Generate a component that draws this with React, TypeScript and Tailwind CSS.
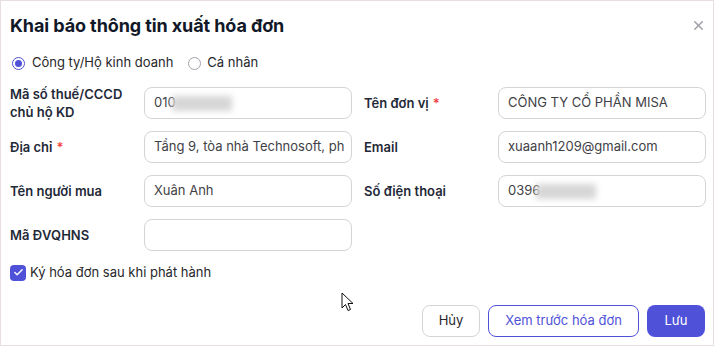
import { Check, X } from 'lucide-react';

const font = { fontFamily: 'Inter, "Noto Sans", sans-serif' };

function Blur({ w }: { w: number }) {
  return <span className="inline-block h-[15px] -ml-[4px] bg-[#d6d6d6] blur-[3px] align-middle" style={{ width: w }} />;
}

function Field({ value, children }: { value?: string; children?: React.ReactNode }) {
  return (
    <div className="w-[208px] h-[32px] shrink-0 rounded-lg border border-[#d4d4d8] flex items-center px-[9px] text-[13px] text-[#3f3f46] whitespace-nowrap overflow-hidden">
      {children ?? value}
    </div>
  );
}

function Label({ children, req }: { children: React.ReactNode; req?: boolean }) {
  return (
    <div className="w-[134px] shrink-0 -my-[2px] text-[13px] font-semibold text-[#1f2937] leading-[18px]">
      {children}
      {req && <span className="text-[#ef4444] ml-1">*</span>}
    </div>
  );
}

export default function App() {
  return (
    <div className="w-[716px] h-[347px] bg-white" style={font}>
      <div className="relative w-[714px] h-[346px] border border-[#e6dee1] flex flex-col pl-[9px] pr-[7px]">
        <div className="flex items-center justify-between h-[48px]">
          <h1 className="text-[18px] font-bold text-[#111827] tracking-[-0.1px]">Khai báo thông tin xuất hóa đơn</h1>
          <X size={15} strokeWidth={2.5} className="text-[#a1a1aa] mt-[1px]" />
        </div>

        <div className="flex items-center h-[28px] text-[13px] text-[#27272a] gap-[15px]">
          <label className="flex items-center gap-[7px] pl-[2px]">
            <span className="w-[13px] h-[13px] rounded-full border border-[#4f52d9] flex items-center justify-center">
              <span className="w-[7px] h-[7px] rounded-full bg-[#4f52d9]" />
            </span>
            Công ty/Hộ kinh doanh
          </label>
          <label className="flex items-center gap-[6px]">
            <span className="w-[13px] h-[13px] rounded-full border border-[#a1a1aa]" />
            Cá nhân
          </label>
        </div>

        <div className="grid grid-cols-[342px_342px] gap-x-[12px] gap-y-[12px] mt-[10px]">
          <div className="flex items-center">
            <Label>Mã số thuế/CCCD chủ hộ KD</Label>
            <Field>
              010
              <Blur w={60} />
            </Field>
          </div>
          <div className="flex items-center">
            <Label req>Tên đơn vị</Label>
            <Field value="CÔNG TY CỔ PHẦN MISA" />
          </div>
          <div className="flex items-center">
            <Label req>Địa chỉ</Label>
            <Field value="Tầng 9, tòa nhà Technosoft, ph" />
          </div>
          <div className="flex items-center">
            <Label>Email</Label>
            <Field value="xuaanh1209@gmail.com" />
          </div>
          <div className="flex items-center">
            <Label>Tên người mua</Label>
            <Field value="Xuân Anh" />
          </div>
          <div className="flex items-center">
            <Label>Số điện thoại</Label>
            <Field>
              0396
              <Blur w={60} />
            </Field>
          </div>
          <div className="flex items-center">
            <Label>Mã ĐVQHNS</Label>
            <Field />
          </div>
        </div>

        <label className="flex items-center gap-[4px] mt-[12px] text-[13px] text-[#27272a]">
          <span className="w-[16px] h-[16px] rounded-[4px] bg-[#4f52d9] flex items-center justify-center">
            <Check size={11} strokeWidth={3} className="text-white" />
          </span>
          Ký hóa đơn sau khi phát hành
        </label>

        <div className="flex justify-end gap-[8px] mt-auto mb-[8px] pr-[1px] text-[13px]">
          <button className="w-[58px] h-[32px] rounded-lg border border-[#d4d4d8] text-[#27272a]">Hủy</button>
          <button className="w-[151px] h-[32px] rounded-lg border border-[#4f52d9] text-[#4f52d9]">Xem trước hóa đơn</button>
          <button className="w-[58px] h-[32px] rounded-lg bg-[#4f52d9] text-white">Lưu</button>
        </div>

        <svg className="absolute left-[340px] top-[291px]" width="13" height="20" viewBox="0 0 13 20">
          <path d="M1 1 L1 16 L4.5 12.5 L7 18.5 L9.5 17.5 L7 11.5 L12 11.5 Z" fill="white" stroke="#111" strokeWidth="1" strokeLinejoin="round" />
        </svg>
      </div>
    </div>
  );
}
